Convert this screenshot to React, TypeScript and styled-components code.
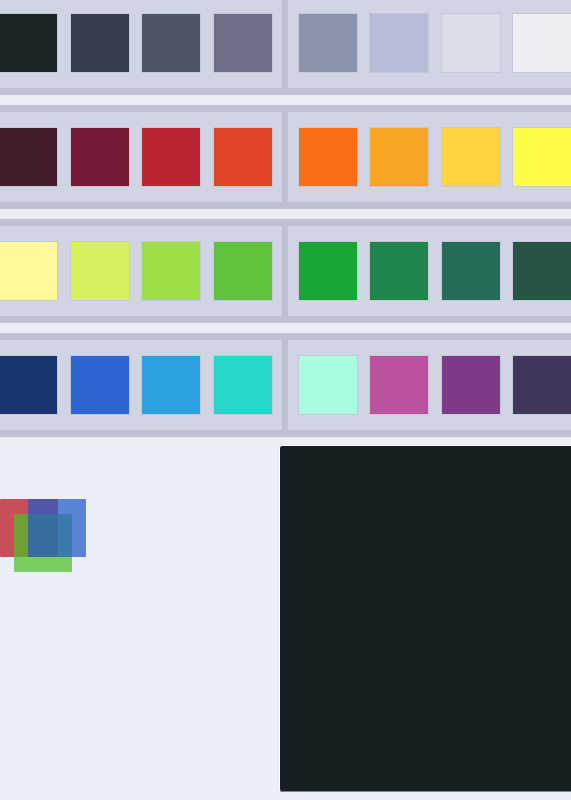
import { createGlobalStyle } from 'styled-components'
import styled from 'styled-components'

const GlobalStyle = createGlobalStyle`
  html, body {
    margin: 0;
    padding: 0;
    background: #eceef5;
    overflow: hidden;
    font-family: 'Liberation Sans', Arial, sans-serif;
  }
`

const PALETTE: string[][] = [
  ['#1b2525', '#373c4b', '#4e5665', '#6e7089', '#8b93aa', '#b7bbd6', '#dadeea', '#eceef4'],
  ['#421c2a', '#751a37', '#bc2432', '#e04528', '#fb6f14', '#f8a525', '#fed241', '#fdfb44'],
  ['#fefa9c', '#d5f25e', '#9ede47', '#5fc23b', '#19a436', '#1f854c', '#266a5a', '#285443'],
  ['#18346d', '#2e64d0', '#2da0e2', '#26d8cc', '#a8fde1', '#bb529f', '#7c3a87', '#40355a'],
]

const Page = styled.div`
  margin: -9px 0 0 -11.5px;
  width: 600px;
`

const Rows = styled.div`
  display: flex;
  flex-direction: column;
  gap: 10px;
`

const Row = styled.div`
  display: flex;
  gap: 6px;
  padding: 7px 0;
  background: #bec1cf;
`

const Group = styled.div`
  display: flex;
  gap: 13.5px;
  padding: 16px 10.5px;
  background: #d1d5e3;
`

const Swatch = styled.div<{ $color: string }>`
  width: 58px;
  height: 58px;
  flex: none;
  background: ${(p) => p.$color};
  box-shadow: 0 0 0 1px rgba(60, 66, 90, 0.08);
`

const Bottom = styled.div`
  display: grid;
  grid-template-columns: 290.5px 1fr;
  padding-top: 8px;
`

const Mixer = styled.div`
  position: relative;
  margin: 54px 0 0 11.5px;
  width: 86px;
  height: 73px;
`

const Chip = styled.div<{ $color: string; $x: number; $y: number }>`
  position: absolute;
  left: ${(p) => p.$x}px;
  top: ${(p) => p.$y}px;
  width: 58px;
  height: 58px;
  border-radius: 1px;
  background: ${(p) => p.$color};
`

const Preview = styled.div`
  height: 347px;
  background: #151f21;
  border-radius: 3px;
  border: 1px solid;
  border-color: #fbfcff #fbfcff #7d868c #fbfcff;
  box-sizing: border-box;
`

export default function App() {
  return (
    <>
      <GlobalStyle />
      <Page>
        <Rows>
          {PALETTE.map((row, i) => (
            <Row key={i}>
              <Group>
                {row.slice(0, 4).map((c) => (
                  <Swatch key={c} $color={c} />
                ))}
              </Group>
              <Group>
                {row.slice(4).map((c) => (
                  <Swatch key={c} $color={c} />
                ))}
              </Group>
            </Row>
          ))}
        </Rows>
        <Bottom>
          <div>
            <Mixer>
              <Chip $color="rgba(186, 17, 26, 0.72)" $x={0} $y={0} />
              <Chip $color="rgba(78, 193, 40, 0.72)" $x={14} $y={15} />
              <Chip $color="rgba(33, 90, 201, 0.72)" $x={28} $y={0} />
            </Mixer>
          </div>
          <Preview />
        </Bottom>
      </Page>
    </>
  )
}
